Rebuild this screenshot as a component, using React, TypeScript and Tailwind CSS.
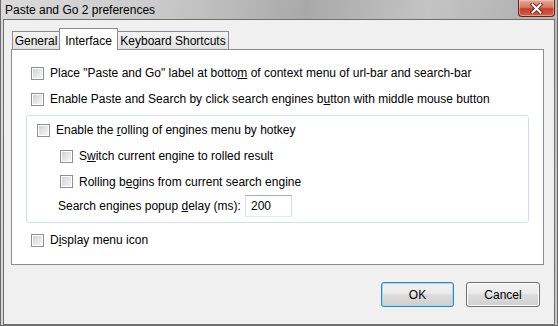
import React from 'react'

// Win7-style preferences dialog of "Paste and Go 2".

const font = "font-['Liberation_Sans',Arial,sans-serif]"

function CheckBox() {
  return (
    <span className="flex h-[13px] w-[13px] shrink-0 items-center justify-center border border-[#8e8f8f] bg-white">
      <span className="h-[9px] w-[9px] bg-[linear-gradient(135deg,#cdd1d6_0%,#e6e7e9_55%,#f4f4f4_100%)]" />
    </span>
  )
}

function Row({ children, className = '' }: { children: React.ReactNode; className?: string }) {
  return (
    <div className={`flex items-center gap-[6px] ${className}`}>
      <CheckBox />
      <span className="leading-none">{children}</span>
    </div>
  )
}

function Button({ label, primary }: { label: string; primary?: boolean }) {
  return (
    <div
      className={`flex h-[25px] items-center justify-center rounded-[3px] border bg-[linear-gradient(#f2f2f2,#ebebeb_45%,#dddddd_50%,#cfcfcf)] ${
        primary
          ? 'w-[73px] border-[#3c7fb1] shadow-[inset_0_0_0_1px_#9fdcf6]'
          : 'w-[74px] border-[#707070] shadow-[inset_0_0_0_1px_#fbfbfb]'
      }`}
    >
      {label}
    </div>
  )
}

export default function App() {
  return (
    <div
      className={`${font} flex h-[326px] w-[558px] flex-col border-x border-b border-[#6b6b6b] bg-[linear-gradient(100deg,#dadada_0%,#cbcbcb_25%,#a9a9a9_50%,#c4c4c4_70%,#b3b3b3_85%,#c9c9c9_100%)] text-[12px] text-black`}
    >
      {/* Barre de titre */}
      <div className="relative flex h-[19px] shrink-0 items-center pl-[4px]">
        <span className="leading-none">Paste and Go 2 preferences</span>
        <div className="absolute right-[2px] top-0 flex h-[17px] w-[37px] items-center justify-center rounded-b-[4px] border border-t-0 border-[#6b2116] bg-[linear-gradient(#e8a897,#d67a66_45%,#c0402c_55%,#d2624c)] shadow-[inset_0_0_0_1px_rgba(255,220,210,0.45)]">
          <svg width="13" height="11" viewBox="0 0 13 11">
            <path d="M2.5 1.5 L10.5 9.5 M10.5 1.5 L2.5 9.5" stroke="#6b2a22" strokeWidth="4" strokeLinecap="square" />
            <path d="M2.5 1.5 L10.5 9.5 M10.5 1.5 L2.5 9.5" stroke="#ffffff" strokeWidth="2" strokeLinecap="square" />
          </svg>
        </div>
      </div>

      {/* Zone client */}
      <div className="mx-[2px] flex flex-1 flex-col border border-[#6f6f6f] bg-[#f0f0f0]">
        {/* Onglets */}
        <div className="relative z-10 -mb-px ml-[8px] mt-[8px] flex h-[22px] items-end">
          <div className="mb-px flex h-[18px] w-[48px] items-center justify-center border border-b-0 border-[#898c95] bg-[linear-gradient(#f3f3f3,#ebebeb_50%,#e1e1e1)]">
            General
          </div>
          <div className="-ml-px flex h-[22px] w-[59px] items-start justify-center border border-b-0 border-[#898c95] bg-white pt-[3px]">
            Interface
          </div>
          <div className="-ml-px mb-px flex h-[18px] w-[112px] items-center justify-center border border-b-0 border-[#898c95] bg-[linear-gradient(#f3f3f3,#ebebeb_50%,#e1e1e1)]">
            Keyboard Shortcuts
          </div>
        </div>

        {/* Panneau */}
        <div className="ml-[7px] flex h-[216px] w-[533px] flex-col border border-[#898c95] bg-white pt-[10px]">
          <Row className="h-[26px] pl-[19px]">
            Place "Paste and Go" label at botto<u>m</u> of context menu of url-bar and search-bar
          </Row>
          <Row className="h-[26px] pl-[19px]">
            Enable Paste and Search by click search engines b<u>u</u>tton with middle mouse button
          </Row>

          <div className="ml-[14px] mr-[14px] mt-[3px] flex flex-col rounded-[3px] border border-[#d5dfe5] pb-[4px] pl-[10px] pt-px">
            <Row className="h-[26px]">
              Enable the <u>r</u>olling of engines menu by hotkey
            </Row>
            <Row className="h-[26px] pl-[23px]">
              S<u>w</u>itch current engine to rolled result
            </Row>
            <Row className="h-[25px] pl-[23px]">
              Rolling b<u>e</u>gins from current search engine
            </Row>
            <div className="flex h-[24px] items-center pl-[21px]">
              <span className="leading-none">
                Search engines popup <u>d</u>elay (ms):
              </span>
              <div className="ml-auto mr-[236px] flex h-[22px] w-[47px] items-center border border-[#abadb3] border-x-[#dbdfe6] border-b-[#e3e9ef] pl-[5px]">
                200
              </div>
            </div>
          </div>

          <Row className="mt-[4px] h-[26px] pl-[19px]">
            D<u>i</u>splay menu icon
          </Row>
        </div>

        {/* Boutons */}
        <div className="mt-[17px] flex justify-end gap-[12px] pr-[14px]">
          <Button label="OK" primary />
          <Button label="Cancel" />
        </div>
      </div>
    </div>
  )
}
